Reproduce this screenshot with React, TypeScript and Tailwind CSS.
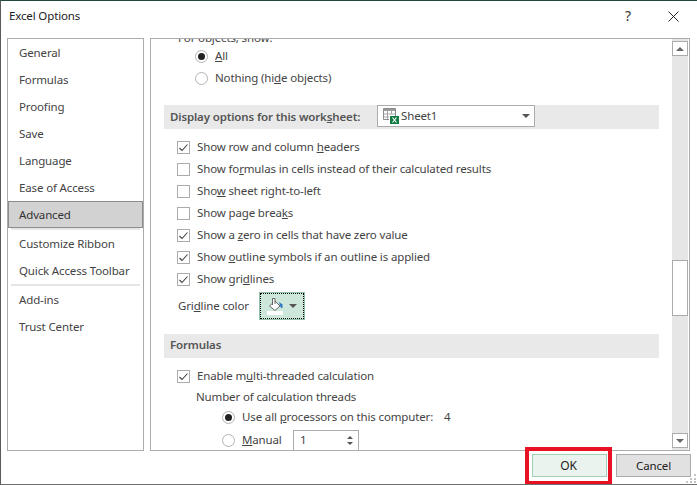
import React from "react";

const Check = ({ on }: { on?: boolean }) => (
  <span className="w-[13px] h-[13px] border border-[#ababab] bg-white flex items-center justify-center shrink-0">
    {on && (
      <svg width="11" height="11" viewBox="0 0 11 11" fill="none">
        <path d="M1.5 6 L4 8.5 L9.5 2.5" stroke="#404040" strokeWidth="1.1" />
      </svg>
    )}
  </span>
);

const Radio = ({ on }: { on?: boolean }) => (
  <span className="w-[13px] h-[13px] rounded-full border border-[#b4b4b4] bg-white flex items-center justify-center shrink-0">
    {on && <span className="w-[7px] h-[7px] rounded-full bg-[#222222]" />}
  </span>
);

const CheckRow = ({ on, children }: { on?: boolean; children: React.ReactNode }) => (
  <div className="h-[22px] flex items-center gap-[7px] pl-[13px]">
    <Check on={on} />
    <span>{children}</span>
  </div>
);

const Nav = ({ children, active }: { children: React.ReactNode; active?: boolean }) => (
  <div
    className={
      active
        ? "h-[27px] flex items-center pl-[10px] bg-[#d2d2d2] border border-[#8c8c8c] text-[#333333]"
        : "h-[27px] flex items-center pl-[11px]"
    }
  >
    {children}
  </div>
);

const Sep = () => <div className="h-[2px] bg-[#e6e6e6] mx-[3px]" />;

export default function App() {
  return (
    <div
      className="w-[697px] h-[485px] bg-white flex flex-col border-l border-b border-l-[#5a5a5a] border-b-[#6e6e6e] border-t border-t-[#1f4a38] text-[11.5px] tracking-[-0.14px] text-[#444444] overflow-hidden relative"
      style={{ fontFamily: '"Noto Sans", "Open Sans", sans-serif' }}
    >
      <div className="h-[37px] shrink-0 flex items-center pl-[8px] pr-[18px] text-[#222222]">
        <span className="flex-1 -mt-[8px]">Excel Options</span>
        <span className="text-[14px] text-[#333333] mr-[37px] -mt-[8px]">?</span>
        <svg width="11" height="11" viewBox="0 0 11 11" className="-mt-[7px]">
          <path d="M0.5 0.5 L10.5 10.5 M10.5 0.5 L0.5 10.5" stroke="#222222" strokeWidth="1" fill="none" />
        </svg>
      </div>

      <div className="h-[413px] shrink-0 flex gap-[6px] pl-[6px]">
        <div className="w-[137px] border border-[#ababab] flex flex-col">
          <Nav>General</Nav>
          <Nav>Formulas</Nav>
          <Nav>Proofing</Nav>
          <Nav>Save</Nav>
          <Nav>Language</Nav>
          <Nav>Ease of Access</Nav>
          <Nav active>Advanced</Nav>
          <Sep />
          <Nav>Customize Ribbon</Nav>
          <Nav>Quick Access Toolbar</Nav>
          <Sep />
          <Nav>Add-ins</Nav>
          <Nav>Trust Center</Nav>
        </div>

        <div className="w-[540px] border border-[#ababab] flex">
          <div className="flex-1 overflow-hidden pl-[13px] pr-[13px]">
            <div className="-mt-[9px]">
              <div className="h-[15px] flex items-center pl-[14px]">For objects, show:</div>
              <div className="h-[22px] flex items-center gap-[7px] pl-[31px]">
                <Radio on />
                <span><u>A</u>ll</span>
              </div>
              <div className="h-[22px] flex items-center gap-[7px] pl-[31px]">
                <Radio />
                <span>Nothing (hi<u>d</u>e objects)</span>
              </div>
              <div className="h-[16px]" />
              <div className="h-[24px] bg-[#e9e9e9] flex items-center pl-[6px] font-semibold text-[#555555]">
                <span className="w-[207px]">Display options for this work<u>s</u>heet:</span>
                <div className="w-[158px] h-[22px] -mt-[2px] bg-white border border-[#ababab] flex items-center pl-[5px] pr-[3px] font-normal text-[#444444]">
                  <svg width="18" height="18" viewBox="0 0 18 18" className="shrink-0">
                    <path d="M0.5 1.5 H12.5 V9 M0.5 1.5 V12.5 H6" fill="none" stroke="#8a8a8a" />
                    <rect x="1" y="2" width="11" height="2" fill="#9a9a9a" />
                    <path d="M0.5 7 H12 M0.5 10 H6 M4.5 4 V12 M8.5 4 V7" stroke="#a5a5a5" fill="none" />
                    <rect x="7" y="9" width="9" height="8" fill="#107c41" />
                    <path d="M9.5 10.5 L13.5 15.5 M13.5 10.5 L9.5 15.5" stroke="#ffffff" strokeWidth="1.2" fill="none" />
                  </svg>
                  <span className="flex-1">Sheet1</span>
                  <span className="w-0 h-0 border-l-[4px] border-r-[4px] border-t-[4px] border-l-transparent border-r-transparent border-t-[#555555] mr-[1px]" />
                </div>
              </div>
              <div className="h-[7px]" />
              <CheckRow on>Show row and column <u>h</u>eaders</CheckRow>
              <CheckRow>Show fo<u>r</u>mulas in cells instead of their calculated results</CheckRow>
              <CheckRow>Sho<u>w</u> sheet right-to-left</CheckRow>
              <CheckRow>Show page brea<u>k</u>s</CheckRow>
              <CheckRow on>Show a <u>z</u>ero in cells that have zero value</CheckRow>
              <CheckRow on>Show <u>o</u>utline symbols if an outline is applied</CheckRow>
              <CheckRow on>Show gri<u>d</u>lines</CheckRow>
              <div className="h-[28px] mt-[2px] flex items-center pl-[14px]">
                <span className="w-[81px]">Gri<u>d</u>line color</span>
                <div className="w-[46px] h-[28px] bg-[#cde8db] border border-[#8fc2a8] outline-1 outline-dotted -outline-offset-2 outline-black flex items-center justify-center gap-[5px]">
                  <svg width="17" height="17" viewBox="0 0 17 17">
                    <path d="M2.5 8 L8 3 L13 8 L8 12.5 Z" fill="#ffffff" stroke="#666666" />
                    <path d="M5.5 7 V0.5 H8 V6" fill="#ffffff" stroke="#666666" />
                    <path d="M12 4 L15.5 6.5 V10 H14 L13 7.5 Z" fill="#2f78c4" />
                    <rect x="0" y="13" width="16" height="4" fill="#ffffff" />
                  </svg>
                  <span className="w-0 h-0 border-l-[4px] border-r-[4px] border-t-[4px] border-l-transparent border-r-transparent border-t-[#555555]" />
                </div>
              </div>
              <div className="h-[14px]" />
              <div className="h-[24px] bg-[#e9e9e9] flex items-center pl-[6px] pb-[2px] font-semibold text-[#555555]">Formulas</div>
              <div className="h-[7px]" />
              <CheckRow on>Enable m<u>u</u>lti-threaded calculation</CheckRow>
              <div className="h-[20px] flex items-center pl-[32px]">Number of calculation threads</div>
              <div className="h-[20px] flex items-center gap-[7px] pl-[58px]">
                <Radio on />
                <span className="w-[195px] whitespace-nowrap">Use all <u>p</u>rocessors on this computer:</span>
                <span>4</span>
              </div>
              <div className="h-[22px] mt-[2px] flex items-center gap-[7px] pl-[58px]">
                <Radio />
                <span className="w-[44px]"><u>M</u>anual</span>
                <div className="w-[66px] h-[21px] border border-[#ababab] flex items-center pl-[6px] pr-[5px]">
                  <span className="flex-1">1</span>
                  <span className="flex flex-col gap-[3px]">
                    <span className="w-0 h-0 border-l-[3px] border-r-[3px] border-b-[3px] border-l-transparent border-r-transparent border-b-[#555555]" />
                    <span className="w-0 h-0 border-l-[3px] border-r-[3px] border-t-[3px] border-l-transparent border-r-transparent border-t-[#555555]" />
                  </span>
                </div>
              </div>
            </div>
          </div>

          <div className="w-[16px] shrink-0 bg-[#e6e6e6] flex flex-col mr-[1px]">
            <div className="h-[2px]" />
            <div className="h-[15px] bg-white border border-[#ababab] flex items-center justify-center">
              <span className="w-0 h-0 border-l-[4px] border-r-[4px] border-b-[4px] border-l-transparent border-r-transparent border-b-[#666666]" />
            </div>
            <div className="h-[204px]" />
            <div className="h-[56px] bg-white border border-[#ababab]" />
            <div className="flex-1" />
            <div className="h-[15px] bg-white border border-[#ababab] flex items-center justify-center mb-[2px]">
              <span className="w-0 h-0 border-l-[4px] border-r-[4px] border-t-[4px] border-l-transparent border-r-transparent border-t-[#666666]" />
            </div>
          </div>
        </div>
      </div>

      <div className="flex-1 flex justify-end items-start gap-[9px] pr-[6px] pt-[3px]">
        <div className="w-[75px] h-[23px] pr-[2px] bg-[#ebf3ee] border border-[#9fd0b5] flex items-center justify-center text-[12px] text-[#222222]">OK</div>
        <div className="w-[75px] h-[23px] bg-[#e1e1e1] border border-[#ababab] flex items-center justify-center text-[#222222]">Cancel</div>
      </div>

      <div className="absolute left-[524px] top-[446px] w-[87px] h-[38px] border-[4px] border-[#e81123]" />
      <svg className="absolute right-[1px] bottom-[1px]" width="10" height="10" viewBox="0 0 10 10">
        <path d="M8 1h2v2H8zM4 5h2v2H4zM8 5h2v2H8zM0 8h2v2H0zM4 8h2v2H4zM8 8h2v2H8z" fill="#c4c4c4" />
      </svg>
    </div>
  );
}
